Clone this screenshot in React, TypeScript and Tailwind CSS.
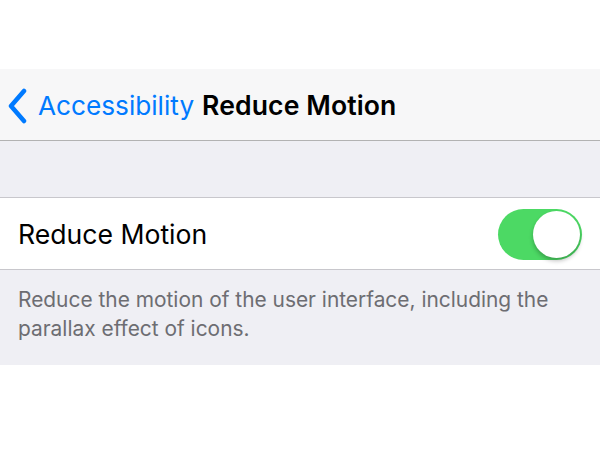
import React from 'react';

export default function App() {
  return (
    <div className="w-[600px] h-[450px] bg-white flex flex-col font-['Inter',sans-serif]">
      <div className="h-[69px]" />
      <header className="h-[72px] bg-[#f7f7f8] border-b border-[#b2b2b2] flex items-center pt-[2px]">
        <svg width="22" height="36" viewBox="0 0 22 36" className="ml-[7px]">
          <path d="M17 3 L4 18 L17 33" fill="none" stroke="#007aff" strokeWidth="4.5" strokeLinecap="round" strokeLinejoin="round" />
        </svg>
        <span className="ml-[9px] text-[26.2px] text-[#007aff]">Accessibility</span>
        <span className="ml-[8px] text-[26.6px] font-semibold text-black tracking-[0.1px]">Reduce Motion</span>
      </header>
      <div className="h-[57px] bg-[#efeff4] border-b border-[#c8c7cc]" />
      <div className="h-[72px] bg-white border-b border-[#c8c7cc] flex items-center justify-between pl-[18px] pr-[18px] pt-[2px]">
        <span className="text-[26.6px] text-black">Reduce Motion</span>
        <div className="w-[84px] h-[51px] rounded-full bg-[#4cd964] relative">
          <div className="absolute right-[2px] top-[2px] w-[47px] h-[47px] rounded-full bg-white shadow-[0_3px_4px_rgba(0,0,0,0.25)]" />
        </div>
      </div>
      <div className="h-[95px] bg-[#efeff4] px-[18px] pt-[15px]">
        <p className="text-[20.9px] leading-[29px] text-[#6d6d72] max-w-[545px]">
          Reduce the motion of the user interface, including the parallax effect of icons.
        </p>
      </div>
    </div>
  );
}
